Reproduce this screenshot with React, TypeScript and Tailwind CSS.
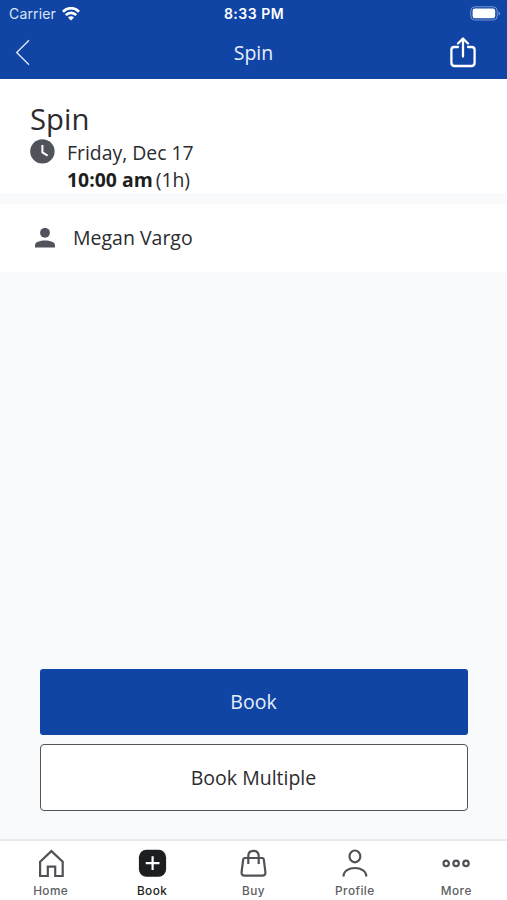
import type { ReactNode } from 'react';
import { clsx } from 'clsx';

function WifiIcon() {
  return (
    <svg className="ml-[6px] h-[14px] w-[18px]" viewBox="0 0 18 14" fill="none" stroke="white" strokeWidth="2.7">
      <path d="M0.9 4.7C5.5 0 12.5 0 17.1 4.7" />
      <path d="M3.8 8.2C6.7 5.1 11.3 5.1 14.2 8.2" />
      <path d="M6 10.6C7.7 8.9 10.3 8.9 12 10.6L9 13.6Z" fill="white" stroke="none" />
    </svg>
  );
}

function BatteryIcon() {
  return (
    <svg className="h-[15px] w-[31px]" viewBox="0 0 31 15" fill="none">
      <rect x="0.8" y="0.8" width="26.4" height="13.2" rx="4" stroke="#7796cf" strokeWidth="1" />
      <rect x="2.6" y="2.5" width="22.6" height="9.8" rx="2.2" fill="white" />
      <path d="M28.5 5.2C30.5 6 30.5 8.8 28.5 9.6Z" fill="#7796cf" />
    </svg>
  );
}

function ShareIcon() {
  return (
    <svg className="h-8 w-7" viewBox="0 0 28 32" fill="none" stroke="white" strokeWidth="2.3" strokeLinecap="round" strokeLinejoin="round">
      <path d="M9 10H5.2Q2.4 10 2.4 12.8V25.7Q2.4 29 5.7 29H22.3Q25.6 29 25.6 25.7V12.8Q25.6 10 22.8 10H19" />
      <path d="M14 19.5V2M9 6.5L14 1.5L19 6.5" />
    </svg>
  );
}

const tabs: { label: string; active?: boolean; icon: ReactNode }[] = [
  {
    label: 'Home',
    icon: (
      <path d="M3.1 12.7L14.4 2.1L25.7 12.7V27H18.2V17.6H10.8V27H3.1Z" />
    ),
  },
  {
    label: 'Book',
    active: true,
    icon: (
      <>
        <rect x="0.9" y="0.8" width="27.2" height="27" rx="7.5" fill="#1d1e20" stroke="none" />
        <path d="M14.6 7.3V21.1M7.7 14.2H21.5" stroke="white" strokeWidth="2.2" />
      </>
    ),
  },
  {
    label: 'Buy',
    icon: (
      <>
        <path d="M5.8 9H23.2Q24.6 9 24.8 10.4L26.4 23.2Q26.7 26.6 23.4 26.6H5.6Q2.3 26.6 2.6 23.2L4.2 10.4Q4.4 9 5.8 9Z" />
        <path d="M9.3 15V7Q9.3 1.8 14.5 1.8Q19.7 1.8 19.7 7V15" />
      </>
    ),
  },
  {
    label: 'Profile',
    icon: (
      <>
        <ellipse cx="13.9" cy="7.4" rx="5.4" ry="5.9" />
        <path d="M2.5 27.4C2.5 16.2 25.3 16.2 25.3 27.4" />
      </>
    ),
  },
  {
    label: 'More',
    icon: (
      <>
        <circle cx="4.2" cy="14.4" r="2.7" />
        <circle cx="14.1" cy="14.4" r="2.7" />
        <circle cx="24" cy="14.4" r="2.7" />
      </>
    ),
  },
];

export default function App() {
  return (
    <div className="flex h-[900px] w-[507px] flex-col overflow-hidden bg-[#f8fafc] font-['Open_Sans',sans-serif] text-[#2b2c2f]">
      <header className="h-[79px] bg-[#1045a5] text-white">
        {/* Status bar */}
        <div className="grid h-[27px] grid-cols-3 items-center pr-[6px] pl-[9px] font-['Inter',sans-serif] text-sm">
          <div className="flex items-center text-[#dce6f8]">
            <span className="tracking-[0.15px]">Carrier</span>
            <WifiIcon />
          </div>
          <div className="pt-px pr-[2px] text-center text-sm font-semibold tracking-[0.5px]">8:33 PM</div>
          <div className="flex justify-end">
            <BatteryIcon />
          </div>
        </div>

        {/* Navigation bar */}
        <div className="flex h-[52px] items-center justify-between pr-[30px] pl-[15px]">
          <button className="flex w-7" aria-label="Back">
            <svg className="h-7 w-4" viewBox="0 0 16 28" fill="none" stroke="#dce6f8" strokeWidth="1.4">
              <path d="M14 1.2L1.7 13.5L14 25.8" />
            </svg>
          </button>
          <h1 className="pb-px pl-[15px] text-[19.5px] leading-[26px] text-[#e8effb]">Spin</h1>
          <button aria-label="Share">
            <ShareIcon />
          </button>
        </div>
      </header>

      <main className="flex flex-1 flex-col">
        <section className="h-[114px] bg-white pt-[21px] pl-[30px]">
          <h2 className="text-[29.3px] leading-[39px]">Spin</h2>
          <div className="flex">
            <svg className="h-[25px] w-[25px]" viewBox="0 0 25 25" fill="none">
              <circle cx="12.4" cy="12.4" r="12.2" fill="#50535b" />
              <path d="M12.4 6V13.4L17.6 16.6" stroke="white" strokeWidth="2" />
            </svg>
            <div className="pl-3 text-[19.4px] leading-[27px]">
              <p>Friday, Dec 17</p>
              <p>
                <b className="text-[#1d1e20]">10:00 am</b>
                <span className="pl-[3px]">(1h)</span>
              </p>
            </div>
          </div>
        </section>

        <section className="mt-[11px] flex h-[68px] items-center bg-white pl-[35px]">
          <svg className="h-5 w-5" viewBox="0 0 20 20" fill="#50535b">
            <circle cx="10" cy="4.8" r="4.9" />
            <path d="M0 19.6V17.2C0 11 20 11 20 17.2V19.6Z" />
          </svg>
          <span className="pl-[18px] text-[19.5px]">Megan Vargo</span>
        </section>

        <div className="mt-auto flex flex-col gap-[9px] px-[39.5px] pb-7 text-[19.5px]">
          <button className="h-[66px] rounded-[3px] bg-[#1045a5] text-[#e8effb]">Book</button>
          <button className="h-[67px] rounded-[4px] border border-[#505357] bg-white pt-px">Book Multiple</button>
        </div>
      </main>

      <nav className="grid h-[61px] grid-cols-5 border-t-2 border-[#e8eaec] bg-white">
        {tabs.map((tab) => (
          <button key={tab.label} className="flex flex-col items-center pt-2">
            <svg className="h-[29px] w-7 overflow-visible" viewBox="0 0 28 29" fill="none" stroke="#505257" strokeWidth="2.2">
              {tab.icon}
            </svg>
            <span
              className={clsx(
                "mt-[5px] font-['Inter',sans-serif] text-[11.8px] leading-4 font-medium tracking-[0.45px]",
                tab.active ? 'text-[#1d1e20]' : 'text-[#5c5e63]',
              )}
            >
              {tab.label}
            </span>
          </button>
        ))}
      </nav>
    </div>
  );
}
